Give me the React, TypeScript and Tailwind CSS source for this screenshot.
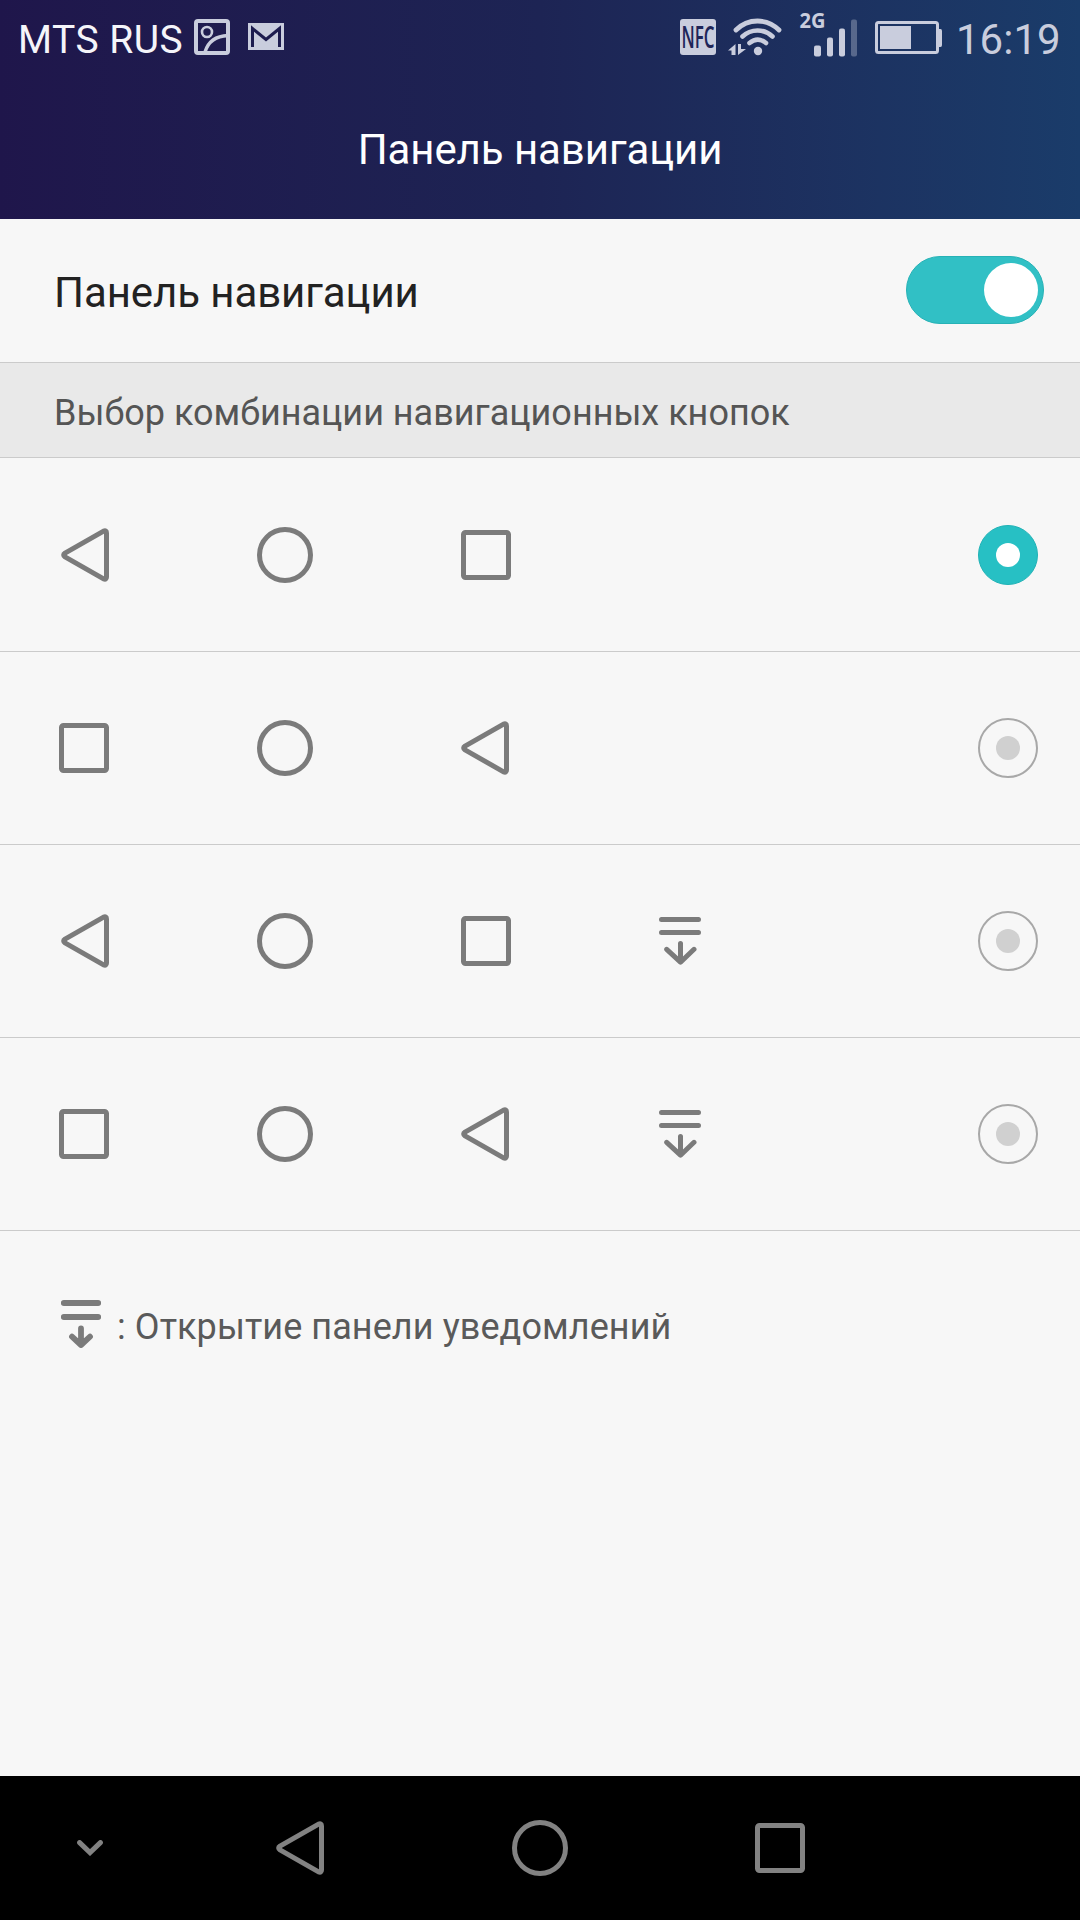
import { useState } from "react";
import clsx from "clsx";

type Shape = "back" | "home" | "recent" | "panel";

const combinations: Shape[][] = [
  ["back", "home", "recent"],
  ["recent", "home", "back"],
  ["back", "home", "recent", "panel"],
  ["recent", "home", "back", "panel"],
];

function BackIcon() {
  return (
    <svg className="w-12 h-[54px] shrink-0" viewBox="0 0 48 54" fill="none" stroke="currentColor" strokeWidth="5" strokeLinejoin="round">
      <path d="M42.6 3.1 Q45.5 2 45.5 5 V49 Q45.5 52 42.6 50.9 L4 28.8 Q1.3 27 4 25.2 Z" />
    </svg>
  );
}

function HomeIcon() {
  return (
    <svg className="size-14 shrink-0" viewBox="0 0 56 56" fill="none" stroke="currentColor" strokeWidth="5">
      <circle cx="28" cy="28" r="25.5" />
    </svg>
  );
}

function RecentIcon() {
  return (
    <svg className="size-[50px] shrink-0" viewBox="0 0 50 50" fill="none" stroke="currentColor" strokeWidth="5">
      <rect x="2.5" y="2.5" width="45" height="45" rx="2" />
    </svg>
  );
}

function PanelIcon() {
  return (
    <svg className="w-[42px] h-12 shrink-0" viewBox="0 0 42 48" fill="none" stroke="currentColor" strokeWidth="5" strokeLinecap="round" strokeLinejoin="round">
      <path d="M2.5 2.5H39.5M2.5 15.5H39.5M21.5 26.5V45M7.7 32.3L21.5 45.2L35 32.3" />
    </svg>
  );
}

function PanelIconSmall() {
  return (
    <svg className="w-10 h-12 shrink-0" viewBox="0 0 40 48" fill="none" stroke="currentColor" strokeLinecap="round" strokeLinejoin="round">
      <path d="M2.7 3H37.3M2.7 17H37.3" strokeWidth="5.8" />
      <path d="M20 28.5V44M11 36.7L20 45L29 36.7" strokeWidth="5.8" />
    </svg>
  );
}

const icons = { back: BackIcon, home: HomeIcon, recent: RecentIcon, panel: PanelIcon };

// one slot per column of the button preview
const slots = [
  "w-[109px] justify-end",
  "w-[352px] justify-center",
  "w-[198px] justify-start",
  "w-[200px] justify-start",
];

function StatusBar() {
  return (
    <div className="flex h-[74px] items-center text-[#c9cddd]">
      <span className="ml-[18px] w-[176px] whitespace-nowrap pt-1.5 text-[39px] leading-none tracking-[0.5px] text-[#f5f5fa]">MTS RUS</span>
      <svg className="size-9 shrink-0" viewBox="0 0 36 36" fill="none" stroke="currentColor">
        <rect x="2" y="2" width="32" height="32" rx="2" strokeWidth="4" />
        <circle cx="13" cy="13" r="5" strokeWidth="2.6" />
        <path d="M11 33C14 23 22 17 34 16.5" strokeWidth="3.4" />
      </svg>
      <svg className="ml-[18px] w-9 h-7 shrink-0" viewBox="0 0 36 28">
        <path d="M0 0H36V27H0Z" fill="currentColor" />
        <path d="M4.5 24V5.5L18 16.5L31.5 5.5V24" fill="none" stroke="#1d1c4f" strokeWidth="3" />
      </svg>

      <div className="ml-auto flex shrink-0 items-center">
        <svg className="size-9 overflow-visible" viewBox="0 0 36 36">
          <rect width="36" height="36" rx="3" fill="currentColor" />
          <text x="1.5" y="29.3" textLength="33" lengthAdjust="spacingAndGlyphs" fill="#1e2558" className="font-['Open_Sans'] text-[31px] font-semibold">
            NFC
          </text>
        </svg>
        <svg className="ml-3 w-14 h-9 overflow-visible" viewBox="0 0 56 36" fill="none" stroke="currentColor" strokeLinecap="round">
          <path d="M8 11C20-1 39-1 51 11" strokeWidth="4.8" />
          <path d="M14.5 17.5C23 9.5 36 9.5 44.500 17.5" strokeWidth="4.6" />
          <path d="M21.5 24C27 19.5 32.500 19.500 38 24" strokeWidth="4.6" />
          <circle cx="30" cy="32" r="4.200" fill="currentColor" stroke="none" />
          <path d="M7.500 25V36H3.5V31.5H0Z M10 25H13V30H18L10 36Z" fill="currentColor" stroke="none" />
        </svg>
        <svg className="ml-4 w-[60px] h-12 overflow-visible" viewBox="0 0 60 48" fill="currentColor">
          <text x="-0.5" y="15.3" textLength="26" lengthAdjust="spacingAndGlyphs" className="font-['Open_Sans'] text-[20.5px] font-bold">
            2G
          </text>
          <rect x="14" y="32.5" width="7" height="11" rx="2" />
          <rect x="27" y="24.5" width="6" height="19" rx="2" />
          <rect x="39" y="15.5" width="6" height="28" rx="2" />
          <rect x="51" y="6.5" width="6" height="37" rx="2" opacity=".35" />
        </svg>
        <svg className="ml-[14px] w-[68px] h-9" viewBox="0 0 68 36" fill="currentColor">
          <rect x="2.5" y="3.5" width="61" height="30" rx="2" fill="none" stroke="currentColor" strokeWidth="3" />
          <rect x="6" y="7" width="31" height="23" />
          <path d="M65 10H66.5Q68 10 68 12V26Q68 28 66.5 28H65Z" />
        </svg>
        <span className="ml-[14px] w-[124px] whitespace-nowrap pt-1.5 text-[42px] leading-none">16:19</span>
      </div>
    </div>
  );
}

function Radio({ checked, onSelect }: { checked: boolean; onSelect: () => void }) {
  return (
    <button
      role="radio"
      aria-checked={checked}
      onClick={onSelect}
      className={clsx(
        "ml-auto mr-[42px] flex size-[60px] items-center justify-center rounded-full",
        checked ? "border border-[#20b2b6] bg-[#27c0c4]" : "border-2 border-[#a8a8a8]"
      )}
    >
      <span className={clsx("size-6 rounded-full", checked ? "bg-white" : "bg-[#d0d0d0]")} />
    </button>
  );
}

export default function App() {
  const [enabled, setEnabled] = useState(true);
  const [selected, setSelected] = useState(0);

  return (
    <div className="flex h-[1920px] w-[1080px] flex-col overflow-hidden bg-[#f7f7f7] font-[Roboto,sans-serif]">
      {/* HEADER */}
      <header className="h-[219px] bg-linear-to-r from-[#1f164b] via-[#1d2454] to-[#1a3c6a]">
        <StatusBar />
        <h1 className="pt-[51px] text-center text-[42px] leading-[50px] tracking-[-0.08px] text-white">Панель навигации</h1>
      </header>

      {/* SWITCH */}
      <div className="flex h-36 items-center border-b border-[#cbcbcb] pb-0.5 pl-[54px] pr-9">
        <span className="pt-1.5 text-[42px] leading-[50px] tracking-[-0.08px] text-[#222]">Панель навигации</span>
        <button
          role="switch"
          aria-checked={enabled}
          onClick={() => setEnabled(!enabled)}
          className={clsx(
            "ml-auto flex h-[68px] w-[138px] items-center rounded-full border px-[5px]",
            enabled ? "justify-end border-[#27b2b6] bg-[#31c0c5]" : "justify-start border-gray-400 bg-gray-300"
          )}
        >
          <span className="size-[54px] rounded-full bg-white" />
        </button>
      </div>

      <h2 className="h-[95px] border-b border-[#cbcbcb] bg-[#e9e9e9] pl-[54px] pt-7 text-[36px] leading-[44px] text-[#555]">
        Выбор комбинации навигационных кнопок
      </h2>

      {/* COMBINATIONS */}
      <div role="radiogroup">
        {combinations.map((shapes, row) => (
          <div
            key={row}
            className="flex h-[193px] items-center border-b border-[#cbcbcb] text-[#7b7b7b] first:h-[194px] first:pt-px"
          >
            {shapes.map((shape, i) => {
              const Icon = icons[shape];
              return (
                <div key={shape} className={clsx("flex", slots[i])}>
                  <Icon />
                </div>
              );
            })}
            <Radio checked={selected === row} onSelect={() => setSelected(row)} />
          </div>
        ))}
      </div>

      {/* LEGEND */}
      <div className="flex pl-[61px] pt-[69px] text-[#7b7b7b]">
        <PanelIconSmall />
        <p className="ml-4 pt-[5px] text-[36px] leading-[44px] tracking-[0.08px] text-[#5a5a5a]">: Открытие панели уведомлений</p>
      </div>

      {/* NAVIGATION BAR */}
      <nav className="mt-auto flex h-36 items-center bg-black text-[#828282]">
        <svg className="ml-[77px] w-[26px] h-4" viewBox="0 0 26 16" fill="none" stroke="currentColor" strokeWidth="5" strokeLinecap="round">
          <path d="M2.6 2.6L13 12.6L23.4 2.6" />
        </svg>
        <div className="ml-[173px] flex">
          <BackIcon />
        </div>
        <div className="ml-[188px] flex">
          <HomeIcon />
        </div>
        <div className="ml-[187px] flex">
          <RecentIcon />
        </div>
      </nav>
    </div>
  );
}
